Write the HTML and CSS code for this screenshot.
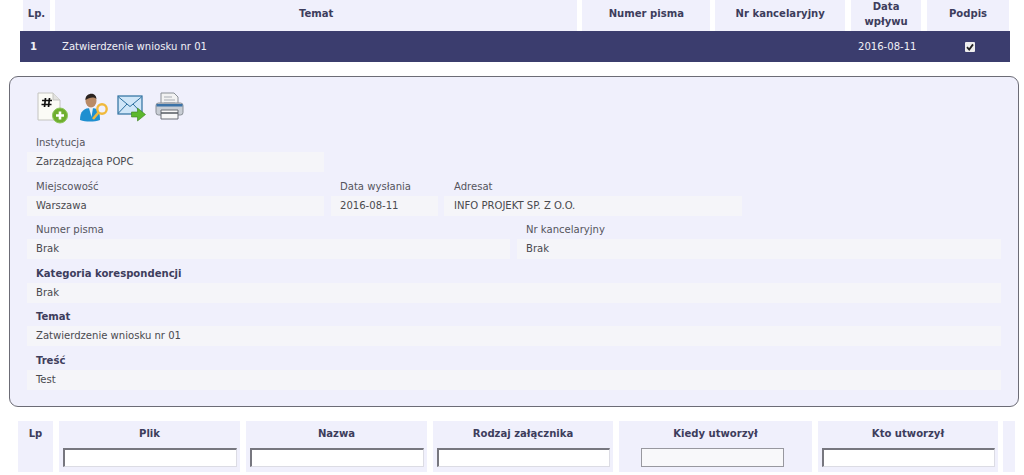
FILE: index.html
```html
<!DOCTYPE html>
<html lang="pl">
<head>
<meta charset="utf-8">
<title>Korespondencja</title>
<link rel="stylesheet" href="styles.css">
</head>
<body>
<div class="list-head">
  <div class="hc c-lp">Lp.</div>
  <div class="hc c-temat">Temat</div>
  <div class="hc c-num">Numer pisma</div>
  <div class="hc c-kanc">Nr kancelaryjny</div>
  <div class="hc c-data">Data<br>wpływu</div>
  <div class="hc c-pod">Podpis</div>
</div>
<div class="list-row">
  <div class="r-lp">1</div>
  <div class="r-temat">Zatwierdzenie wniosku nr 01</div>
  <div class="r-data">2016-08-11</div>
  <div class="r-pod"><svg class="check" viewBox="0 0 10 10" width="10" height="10"><rect width="10" height="10" rx="1" fill="#eeeeee"/><path d="M2 5.2 4.2 7.6 8 2.4" fill="none" stroke="#222" stroke-width="1.8"/></svg></div>
</div>
<section class="panel">
  <div class="tools">
    <svg class="ic" viewBox="0 0 32 32" width="32" height="32"><path d="M1 1h15l7 7v20H1z" fill="#fbfbf6" stroke="#c4c4c0"/><path d="M16 1v7h7" fill="#e2e2e0" stroke="#c4c4c0"/><path d="M8.500 6 7.500 15M12.500 6 11.500 15M5 8.500h10M4.500 12.500h10" stroke="#111" stroke-width="1.700"/><circle cx="23" cy="23.500" r="7.500" fill="#6fae2e" stroke="#8cc65a"/><path d="M23 19.500v8M19 23.500h8" stroke="#fff" stroke-width="2.600"/></svg>
    <svg class="ic" viewBox="0 0 29 32" width="29" height="32"><ellipse cx="12" cy="9" rx="5.500" ry="6.500" fill="#b98a66"/><path d="M6.500 8C6 1 17-1 17.500 7 14 4 10 6 6.500 8z" fill="#2a2320"/><path d="M1 28c0-9 4-12 11-12s9 3 9 12c-6 2-14 2-20 0z" fill="#1f8fd0"/><path d="M10 16h4l-1.500 9z" fill="#e8f0f4"/><circle cx="23" cy="17" r="4.700" fill="none" stroke="#f0b93c" stroke-width="2.400"/><path d="M19.500 20.500 14 27" stroke="#f0b93c" stroke-width="2.600"/></svg>
    <svg class="ic" viewBox="0 0 29 32" width="29" height="32"><rect x="1" y="4" width="24" height="18" fill="#cfe6f8" stroke="#2c6f9e" stroke-width="1.200"/><path d="M1.500 5 13 14.500 24.500 5M1.500 21l8.500-9M24.500 21 16 12" fill="none" stroke="#2c6f9e"/><path d="M14.500 20h6v-4l8 6.500-8 6.500v-4h-6z" fill="#5cb82e" stroke="#3a7f1c" stroke-width=".6"/></svg>
    <svg class="ic" viewBox="0 0 29 32" width="29" height="32"><path d="M6 1h13l4 4v9H6z" fill="#f2f2f2" stroke="#8a8f96"/><path d="M9 5h8M9 8h11M9 11h11" stroke="#a8adb4"/><rect x="1" y="11" width="27" height="12" rx="2.500" fill="#c8cdd4" stroke="#8a8f96"/><rect x="1.500" y="12" width="26" height="2.500" fill="#3b73a8"/><path d="M6 18h17v9H6z" fill="#f8f8f8" stroke="#6a6f76"/><path d="M6 21h17" stroke="#555a60" stroke-width="1.500"/></svg>
  </div>
  <div class="frow f-a"><div class="fld"><div class="lb">Instytucja</div><div class="val">Zarządzająca POPC</div></div></div>
  <div class="frow f-b">
    <div class="fld"><div class="lb">Miejscowość</div><div class="val">Warszawa</div></div>
    <div class="fld"><div class="lb">Data wysłania</div><div class="val">2016-08-11</div></div>
    <div class="fld"><div class="lb">Adresat</div><div class="val">INFO PROJEKT SP. Z O.O.</div></div>
  </div>
  <div class="frow f-c">
    <div class="fld"><div class="lb">Numer pisma</div><div class="val">Brak</div></div>
    <div class="fld"><div class="lb">Nr kancelaryjny</div><div class="val">Brak</div></div>
  </div>
  <div class="frow"><div class="fld"><div class="lb strong">Kategoria korespondencji</div><div class="val">Brak</div></div></div>
  <div class="frow"><div class="fld"><div class="lb strong">Temat</div><div class="val">Zatwierdzenie wniosku nr 01</div></div></div>
  <div class="frow"><div class="fld"><div class="lb strong">Treść</div><div class="val">Test</div></div></div>
</section>
<div class="att">
  <div class="ac a-lp"><div class="at">Lp</div></div>
  <div class="ac a-plik"><div class="at">Plik</div><input class="inp" type="text" aria-label="Plik"></div>
  <div class="ac a-plik"><div class="at">Nazwa</div><input class="inp" type="text" aria-label="Nazwa"></div>
  <div class="ac a-rodz"><div class="at">Rodzaj załącznika</div><input class="inp" type="text" aria-label="Rodzaj załącznika"></div>
  <div class="ac a-kiedy"><div class="at">Kiedy utworzył</div><input class="inp dis" type="text" aria-label="Kiedy utworzył" disabled></div>
  <div class="ac a-kto"><div class="at">Kto utworzył</div><input class="inp" type="text" aria-label="Kto utworzył"></div>
  <div class="ac a-end"></div>
</div>
</body>
</html>
```
FILE: styles.css
```css
* { box-sizing: border-box; }
html, body { height: 475px; overflow: hidden; }
body { margin: 0; background: #fff; font-family: "DejaVu Sans Condensed", "DejaVu Sans", sans-serif; font-size: 11.2px; color: #4a4a4f; }

.list-head { display: flex; gap: 5px; height: 31px; margin-left: 23px; width: 986px; }
.hc { background: #f0f0fc; display: flex; align-items: center; justify-content: center; text-align: center; padding-bottom: 4px; font-weight: 700; font-size: 11.2px; line-height: 15px; color: #3d3d5c; }
.c-lp { width: 27px; }
.c-temat { width: 523px; }
.c-num { width: 128px; }
.c-kanc { width: 130px; }
.c-data { width: 70px; margin-left: 1px; }
.c-pod { width: 82px; margin-left: 1px; }

.list-row { display: flex; align-items: center; height: 31px; margin-left: 20px; width: 990px; background: #3b3d6e; color: #f0f0f6; font-size: 11.2px; }
.r-lp { width: 42px; padding-left: 10px; font-weight: 700; }
.r-temat { flex: 1; }
.r-data { width: 58px; text-align: center; white-space: nowrap; margin-right: 14px; }
.r-pod { width: 80px; display: flex; justify-content: center; }

.panel { margin: 14px 0 0 9px; width: 1010px; height: 331px; border: 1px solid #6c6c76; border-radius: 9px; background: #f0f0fc; padding: 15px 17px 0 17px; }
.tools { display: flex; gap: 9px; height: 32px; padding-left: 10px; margin-bottom: 9px; }
.tools .ic:first-child { margin-right: 1px; }
.ic { flex: none; }
.frow { display: flex; gap: 7px; height: 43.500px; }
.fld { flex: 1; min-width: 0; display: flex; flex-direction: column; }
.lb { height: 23px; padding: 3px 0 0 9px; line-height: 14px; color: #55555c; flex: none; }
.strong { font-weight: 700; color: #3d3d5c; font-size: 11.2px; }
.val { height: 20px; background: #f5f5f9; padding-left: 9px; line-height: 20px; color: #4a4a4f; margin-top: -4px; }
.f-a .fld { flex: none; width: 297px; }
.f-b .fld:nth-child(1) { flex: none; width: 297px; }
.f-b .fld:nth-child(2) { flex: none; width: 107px; }
.f-b .fld:nth-child(3) { flex: none; width: 298px; margin-left: -1px; }
.f-b .fld:nth-child(3) .lb, .f-b .fld:nth-child(3) .val { padding-left: 10px; }
.f-c .fld:nth-child(1) { flex: none; width: 483px; }

.att { display: flex; gap: 6px; height: 51px; margin: 14px 0 0 18px; }
.ac { background: #f0f0fc; display: flex; flex-direction: column; align-items: center; flex: none; }
.at { height: 27px; padding-top: 6px; line-height: 14px; font-weight: 700; font-size: 11.2px; color: #3d3d5c; }
.a-lp { width: 35px; }
.a-plik { width: 181px; }
.a-rodz { width: 180px; }
.a-kiedy { width: 193px; }
.a-kto { width: 180px; }
.a-end { width: 12px; margin-left: -1px; }
.inp { display: block; height: 19px; width: calc(100% - 7px); margin: 0; padding: 0; background: #fff; border: 1px solid #dcdce4; border-top: 2px solid #77777f; border-left: 2px solid #77777f; border-radius: 0; }
.dis { width: 143px; margin-right: 6px; background: #f8f8fa; border: 1px solid #98989f; }
```
